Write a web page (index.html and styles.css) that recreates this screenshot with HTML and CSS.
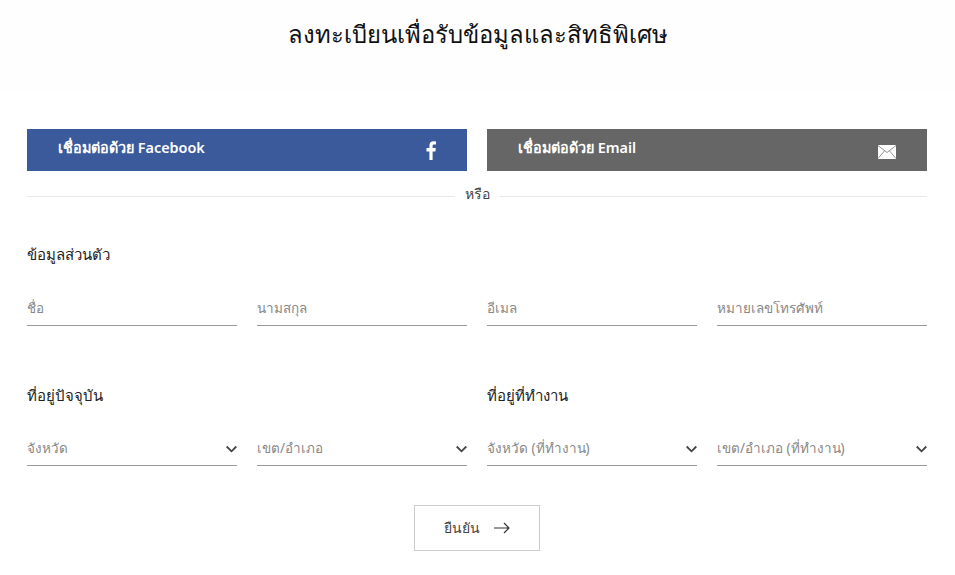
FILE: index.html
```html
<!DOCTYPE html>
<html lang="th">
<head>
    <meta charset="UTF-8">
    <meta name="viewport" content="width=device-width, initial-scale=1.0">
    <title>ลงทะเบียน</title>
    <link rel="stylesheet" href="styles.css">
</head>
<body>
    <header class="page-head">
        <h1>ลงทะเบียนเพื่อรับข้อมูลและสิทธิพิเศษ</h1>
    </header>

    <form class="reg-form">
        <div class="social-row">
            <a class="social-btn fb-btn" href="#">
                <span>เชื่อมต่อด้วย Facebook</span>
                <svg class="fb-icon" width="10" height="19" viewBox="0 0 10 19"><path d="M6.6 19V10.4H9.4L9.8 7.1H6.6V5C6.6 4 6.9 3.4 8.3 3.4H10V0.4C9.7 0.3 8.7 0.2 7.6 0.2C5.100 0.2 3.400 1.700 3.400 4.500V7.100H0.500V10.400H3.400V19Z" fill="#fff"/></svg>
            </a>
            <a class="social-btn mail-btn" href="#">
                <span>เชื่อมต่อด้วย Email</span>
                <svg class="mail-icon" width="18" height="14" viewBox="0 0 18 14"><rect width="18" height="14" fill="#fff"/><path d="M0 .5L9 7.500L18 .5M0 13.500L6.500 5.800M18 13.500L11.500 5.800" fill="none" stroke="#777" stroke-width=".8"/></svg>
            </a>
        </div>

        <div class="divider"><span>หรือ</span></div>

        <h2 class="sec-title first">ข้อมูลส่วนตัว</h2>
        <div class="field-row">
            <input class="field" type="text" placeholder="ชื่อ">
            <input class="field" type="text" placeholder="นามสกุล">
            <input class="field" type="text" placeholder="อีเมล">
            <input class="field" type="text" placeholder="หมายเลขโทรศัพท์">
        </div>

        <div class="address-titles">
            <h2 class="sec-title">ที่อยู่ปัจจุบัน</h2>
            <h2 class="sec-title">ที่อยู่ที่ทำงาน</h2>
        </div>
        <div class="field-row address-row">
            <div class="field select">จังหวัด<svg class="chev" width="11" height="8" viewBox="0 0 11 8"><path d="M.7 1.500L5.500 6.300L10.300 1.500" fill="none" stroke="#444" stroke-width="1.800"/></svg></div>
            <div class="field select">เขต/อำเภอ<svg class="chev" width="11" height="8" viewBox="0 0 11 8"><path d="M.7 1.500L5.500 6.300L10.300 1.500" fill="none" stroke="#444" stroke-width="1.800"/></svg></div>
            <div class="field select">จังหวัด (ที่ทำงาน)<svg class="chev" width="11" height="8" viewBox="0 0 11 8"><path d="M.7 1.500L5.500 6.300L10.300 1.500" fill="none" stroke="#444" stroke-width="1.800"/></svg></div>
            <div class="field select">เขต/อำเภอ (ที่ทำงาน)<svg class="chev" width="11" height="8" viewBox="0 0 11 8"><path d="M.7 1.500L5.500 6.300L10.300 1.500" fill="none" stroke="#444" stroke-width="1.800"/></svg></div>
        </div>

        <div class="submit-row">
            <button class="submit-btn" type="submit">ยืนยัน
                <svg width="16" height="12" viewBox="0 0 16 12"><path d="M0 6H15M10 1L15 6L10 11" fill="none" stroke="#333" stroke-width="1.200"/></svg>
            </button>
        </div>
    </form>
</body>
</html>
```

FILE: styles.css
```css
* {
    box-sizing: border-box;
}
body {
    margin: 0;
    font-family: "Noto Sans", "Liberation Sans", sans-serif;
    color: #222;
    background: #fff;
}
.page-head {
    height: 90px;
    padding-top: 16px;
    background: #fefefe;
    text-align: center;
}
.page-head h1 {
    margin: 0;
    font-size: 23.8px;
    line-height: 36px;
    font-weight: 500;
    color: #111;
}
.reg-form {
    padding: 39px 28px 0 27px;
}
.social-row {
    display: flex;
    gap: 20px;
}
.social-btn {
    flex: 1;
    height: 42px;
    padding: 0 31px;
    display: flex;
    align-items: center;
    justify-content: space-between;
    color: #fff;
    font-size: 14.4px;
    font-weight: 600;
    text-decoration: none;
}
.social-btn span {
    margin-top: -6px;
}
.fb-btn {
    background: #3b5a9b;
}
.mail-btn {
    background: #666;
}
.fb-icon {
    margin: 0;
}
.mail-icon {
    margin: 3px 0 0 0;
}
.divider {
    display: flex;
    align-items: center;
    gap: 10px;
    margin-top: 13px;
    font-size: 14px;
    line-height: 20px;
    color: #444;
}
.divider::before,
.divider::after {
    content: "";
    flex: 1;
    height: 1px;
    background: #e8e8e8;
    margin-top: 5px;
}
.sec-title {
    margin: 0;
    font-size: 15px;
    line-height: 22px;
    font-weight: 500;
    color: #222;
}
.sec-title.first {
    margin-top: 39px;
}
.field-row {
    display: grid;
    grid-template-columns: repeat(4, 210px);
    gap: 20px;
    margin-top: 25px;
}
.address-row {
    margin-top: 24px;
}
.field {
    display: flex;
    align-items: center;
    justify-content: space-between;
    height: 36px;
    padding: 0;
    border: 0;
    border-bottom: 1px solid #999;
    outline: none;
    font-family: inherit;
    font-size: 13.5px;
    color: #888;
    background: none;
}
.field::placeholder {
    color: #888;
}
.address-titles {
    display: grid;
    grid-template-columns: repeat(2, 440px);
    gap: 20px;
    margin-top: 58px;
}
.chev {
    margin: 3px 0 0 0;
}
.submit-row {
    display: flex;
    justify-content: center;
    margin-top: 39px;
}
.submit-btn {
    width: 126px;
    height: 46px;
    display: flex;
    align-items: center;
    justify-content: center;
    gap: 14px;
    background: #fff;
    border: 1px solid #ccc;
    font-family: inherit;
    font-size: 14px;
    color: #444;
}
```
